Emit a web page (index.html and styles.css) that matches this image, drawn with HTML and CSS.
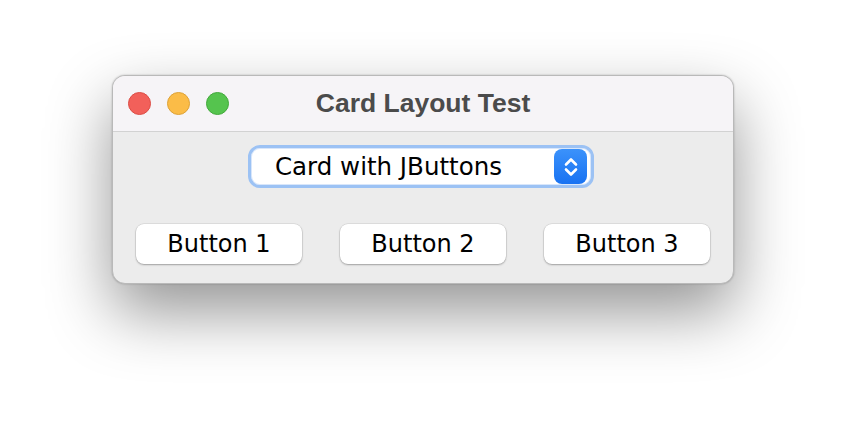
FILE: index.html
```html
<!DOCTYPE html>
<html>
<head>
<meta charset="utf-8">
<link rel="stylesheet" href="styles.css">
</head>
<body>
<div class="window">
  <div class="titlebar">
    <div class="lights">
      <span class="light red"></span>
      <span class="light yellow"></span>
      <span class="light green"></span>
    </div>
    <div class="title">Card Layout Test</div>
  </div>
  <div class="content">
    <div class="combo-row">
      <div class="combo">
        <span class="combo-text">Card with JButtons</span>
        <span class="combo-arrow">
          <svg width="18" height="24" viewBox="0 0 18 24">
            <path d="M4 9.5 L9 4.5 L14 9.5" fill="none" stroke="#fff" stroke-width="2.6" stroke-linecap="round" stroke-linejoin="round"/>
            <path d="M4 14.5 L9 19.5 L14 14.5" fill="none" stroke="#fff" stroke-width="2.6" stroke-linecap="round" stroke-linejoin="round"/>
          </svg>
        </span>
      </div>
    </div>
    <div class="buttons">
      <div class="btn">Button 1</div>
      <div class="btn">Button 2</div>
      <div class="btn">Button 3</div>
    </div>
  </div>
</div>
</body>
</html>
```
FILE: styles.css
```css
html, body {
  margin: 0;
  padding: 0;
  background: #ffffff;
}
body {
  width: 846px;
  height: 432px;
  padding: 75px 0 0 112px;
  box-sizing: border-box;
  overflow: hidden;
}
.window {
  width: 622px;
  height: 209px;
  box-sizing: border-box;
  border: 1px solid #b9b9b9;
  border-radius: 13px;
  background: #ececec;
  overflow: hidden;
  box-shadow: 0 28px 64px rgba(0,0,0,0.42), 0 0 2px rgba(0,0,0,0.25);
}
.titlebar {
  height: 55px;
  background: #f6f4f7;
  border-bottom: 1px solid #d2d2d2;
  display: flex;
  align-items: center;
  position: relative;
}
.lights {
  display: flex;
  gap: 16px;
  padding-left: 15px;
}
.light {
  width: 23px;
  height: 23px;
  border-radius: 50%;
  box-sizing: border-box;
}
.red { background: #f2605a; border: 1px solid #dc4d46; }
.yellow { background: #fbbc47; border: 1px solid #dea236; }
.green { background: #55c44e; border: 1px solid #43a93c; }
.title {
  position: absolute;
  left: 0;
  right: 0;
  top: 0;
  bottom: 0;
  display: flex;
  align-items: center;
  justify-content: center;
  font-family: "Liberation Sans", Arial, sans-serif;
  font-weight: bold;
  font-size: 26.5px;
  color: #4b4b4b;
  pointer-events: none;
}
.content {
  padding-top: 13px;
}
.combo-row {
  display: flex;
  justify-content: center;
  padding-right: 4px;
}
.combo {
  width: 346px;
  height: 43px;
  box-sizing: border-box;
  border: 3px solid #9cc2f4;
  border-radius: 12px;
  background: #ffffff;
  display: flex;
  align-items: center;
  justify-content: space-between;
  padding: 0 4px 0 24px;
  box-shadow: inset 0 0 0 1px #d8e6fa;
}
.combo-text {
  font-family: "DejaVu Sans", sans-serif;
  font-size: 24.5px;
  color: #000;
}
.combo-arrow {
  width: 33px;
  height: 35px;
  border-radius: 8px;
  background: linear-gradient(#3b92fb, #1872f2);
  display: flex;
  align-items: center;
  justify-content: center;
}
.buttons {
  display: flex;
  gap: 38px;
  padding: 36px 0 0 23px;
}
.btn {
  width: 166px;
  height: 40px;
  box-sizing: border-box;
  background: #ffffff;
  border-radius: 8px;
  box-shadow: 0 0 0 0.5px rgba(0,0,0,0.12), 0 1px 2px rgba(0,0,0,0.28);
  display: flex;
  align-items: center;
  justify-content: center;
  font-family: "DejaVu Sans", sans-serif;
  font-size: 24px;
  color: #000;
}
```
